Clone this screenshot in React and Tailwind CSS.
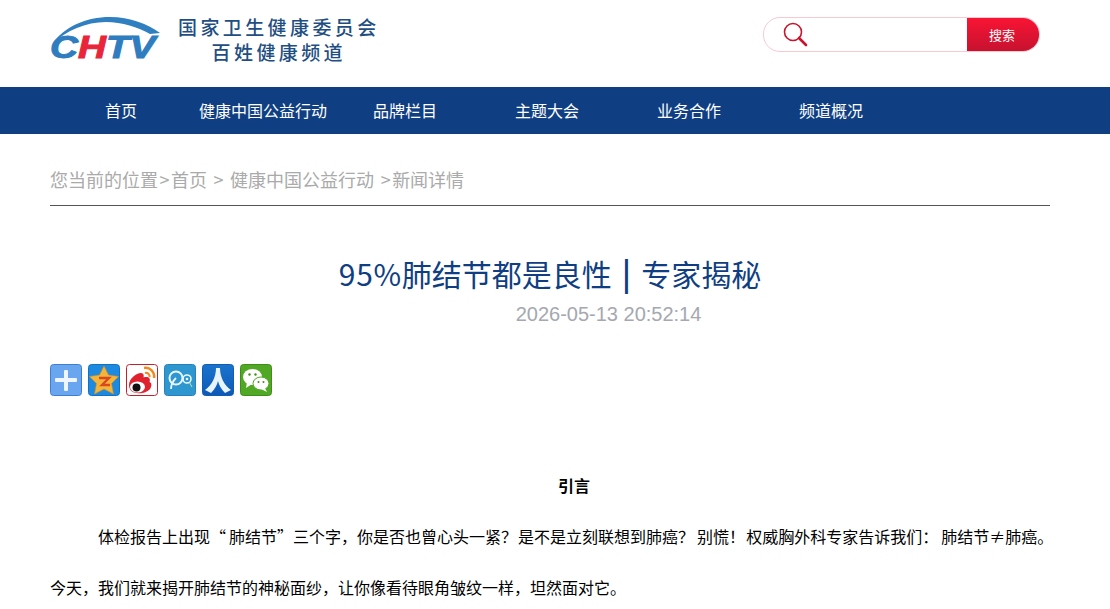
import React from 'react';

const NAV_ITEMS = ['首页', '健康中国公益行动', '品牌栏目', '主题大会', '业务合作', '频道概况'];

const CJK = "font-['Noto_Sans_CJK_SC','Noto_Sans',sans-serif]";

const Logo = () => (
    <div className="flex items-start">
        <div className="relative w-[112px] h-[46px]">
            <svg width="112" height="46" viewBox="0 0 112 46" className="absolute left-0 top-0">
                <path d="M3 28 C14 12 36 2 60 2 C80 2 98 9 110 18 L100 19 C88 12 72 7 56 7 C36 7 16 16 3 28 Z" fill="#2f7fc1" />
            </svg>
            <span className="absolute left-0 top-[17px] font-['Liberation_Sans',sans-serif] font-bold italic text-[32px] leading-[30px] [-webkit-text-stroke:1px_currentColor] scale-x-[1.21] origin-left text-[#2f7dbf]">
                C<span className="text-[#e8253a]">H</span>TV
            </span>
        </div>
        <div className={`ml-[16px] -mt-px text-[#1f4f82] font-medium text-[19px] leading-[25px] tracking-[3.4px] text-center ${CJK}`}>
            <div>国家卫生健康委员会</div>
            <div>百姓健康频道</div>
        </div>
    </div>
);

const SearchBox = () => (
    <div className="mt-[2px] flex w-[277px] h-[35px] rounded-[17px] border border-[#fbc8d0] overflow-hidden">
        <div className="flex-1 flex items-center pl-[19px]">
            <svg width="25" height="25" viewBox="0 0 25 25" fill="none" stroke="#c8142c">
                <circle cx="10" cy="10" r="8.5" strokeWidth="1.6" />
                <path d="M16 16 L23 23" strokeWidth="2.6" strokeLinecap="round" />
            </svg>
        </div>
        <div className={`w-[72px] -my-px bg-gradient-to-b from-[#fb1434] to-[#c4122f] text-white text-[13px] flex items-center justify-center pr-[2px] ${CJK}`}>搜索</div>
    </div>
);

const ShareIcons = () => (
    <div className="flex gap-[6px]">
        <svg width="32" height="32" viewBox="0 0 32 32">
            <rect x="0.5" y="0.5" width="31" height="31" rx="3" fill="#6aa5f0" stroke="#3f7fd0" />
            <rect x="5" y="14" width="22" height="4" rx="1" fill="#eef5fd" />
            <rect x="14" y="6" width="4" height="21" rx="1" fill="#eef5fd" />
        </svg>
        <svg width="32" height="32" viewBox="0 0 32 32">
            <rect x="0.5" y="0.5" width="31" height="31" rx="3" fill="#1b8ae0" stroke="#1670c0" />
            <path d="M16 2 L20.5 11 L30.5 12.5 L23.5 19.5 L25.5 30 L16 25 L6.5 30 L8.5 19.5 L1.5 12.5 L11.5 11 Z" fill="#f3b63a" stroke="#d98c20" strokeWidth="0.6" />
            <path d="M11 14 H21 L14 21 H22" fill="none" stroke="#d9481e" strokeWidth="2.4" />
        </svg>
        <svg width="32" height="32" viewBox="0 0 32 32">
            <rect x="0.5" y="0.5" width="31" height="31" rx="3" fill="#fff" stroke="#c4202c" />
            <path d="M3 21 C3 15 10 9 15 9 C18 9 18 12 17.5 13.5 C22 12 25 14 23.5 18 C26 19 26 22 24 25 C20 30 8 31 4.5 26 C3.5 24.5 3 23 3 21 Z" fill="#e0222e" />
            <ellipse cx="11.5" cy="23" rx="7.5" ry="5.5" fill="#fff" />
            <circle cx="10.5" cy="23.5" r="4" fill="#111" />
            <path d="M18 4 C24 3 29 8 28 14" fill="none" stroke="#f08a1e" strokeWidth="2.5" />
            <path d="M19 9 C22 8 24 11 23.5 13" fill="none" stroke="#f08a1e" strokeWidth="2.2" />
        </svg>
        <svg width="32" height="32" viewBox="0 0 32 32">
            <rect x="0.5" y="0.5" width="31" height="31" rx="3" fill="#2f97cf" stroke="#2a80b8" />
            <circle cx="12" cy="14" r="6.5" fill="none" stroke="#e8f6fb" strokeWidth="2" />
            <path d="M12 14 C8 18 7 22 7 25" fill="none" stroke="#e8f6fb" strokeWidth="1.8" />
            <circle cx="23" cy="15" r="4" fill="none" stroke="#e8f6fb" strokeWidth="1.6" />
            <circle cx="23" cy="15" r="1.3" fill="#e8f6fb" />
            <path d="M25.5 18.5 L28 23" stroke="#bfe6a0" strokeWidth="1" />
        </svg>
        <svg width="32" height="32" viewBox="0 0 32 32">
            <defs>
                <linearGradient id="renren" x1="0" y1="0" x2="0" y2="1">
                    <stop offset="0" stopColor="#1a74cc" />
                    <stop offset="1" stopColor="#0d58b8" />
                </linearGradient>
            </defs>
            <rect x="0.5" y="0.5" width="31" height="31" rx="3" fill="url(#renren)" stroke="#0f5cb0" />
            <path d="M14 4 H18 C18 13 22 21 29 26 L23 29 C19 25 17 21 16 17 C15 21 13 25 9 29 L3 26 C10 21 14 13 14 4 Z" fill="#e8f4fc" />
        </svg>
        <svg width="32" height="32" viewBox="0 0 32 32">
            <rect x="0.5" y="0.5" width="31" height="31" rx="3" fill="#50a824" stroke="#3f8e1a" />
            <ellipse cx="12.5" cy="13" rx="9.5" ry="8" fill="#fff" />
            <path d="M7 18 L6 24 L12 20 Z" fill="#fff" />
            <ellipse cx="21" cy="19.5" rx="8" ry="6.5" fill="#fff" stroke="#50a824" />
            <path d="M25 24 L27 28 L21 25 Z" fill="#fff" />
            <circle cx="9.5" cy="10.5" r="1.2" fill="#3f8e1a" />
            <circle cx="15.5" cy="10.5" r="1.2" fill="#3f8e1a" />
            <circle cx="18.5" cy="18" r="1" fill="#3f8e1a" />
            <circle cx="23.5" cy="18" r="1" fill="#3f8e1a" />
        </svg>
    </div>
);

export default function App() {
    return (
        <div className={`w-[1110px] h-[609px] overflow-hidden bg-white ${CJK}`}>
            {/* header */}
            <div className="h-[87px] flex items-start justify-between pl-[50px] pr-[70px] pt-[15px]">
                <Logo />
                <SearchBox />
            </div>

            {/* nav */}
            <div className="h-[47px] bg-[#0f3f82] flex pl-[50px] pb-[2px]">
                {NAV_ITEMS.map(item => (
                    <div key={item} className="w-[142px] flex items-center justify-center text-white text-[16px] whitespace-nowrap">{item}</div>
                ))}
            </div>

            <div className="mx-[50px] w-[1000px]">
                {/* breadcrumb */}
                <div className="h-[72px] border-b border-[#555] pt-[32px] text-[18px] leading-[27px] text-[#aaaaaa] [word-spacing:1px]">
                    您当前的位置<span className="px-[1.5px]">&gt;</span>首页 <span className="px-[1.5px]">&gt;</span> 健康中国公益行动 <span className="px-[1.5px]">&gt;</span>新闻详情
                </div>

                <h1 className="mt-[45px] h-[45px] text-center text-[30px] leading-[45px] font-normal text-[#0f3f82]">
                    <span className="tracking-[0.7px]">95%</span>肺结节都是良性<span className="px-[10px] text-[36px] leading-[30px] font-['Liberation_Sans',sans-serif]">|</span>专家揭秘
                </h1>
                <div className="mt-[4px] pl-[117px] text-center text-[20px] leading-[28px] text-[#a5a8b0] font-['Liberation_Sans',sans-serif]">2026-05-13 20:52:14</div>

                <div className="mt-[36px]">
                    <ShareIcons />
                </div>

                <div className="mt-[77px] pl-[48px] text-center text-[16px] leading-[24px] font-bold text-black">引言</div>
                <p className="mt-[27px] indent-[48px] text-[16px] leading-[24px] text-black whitespace-nowrap">
                    体检报告上出现<span className="pr-[3px]">“</span>肺结节”三个字，你是否也曾心头一紧<span className="pr-[1px]">？</span>是不是立刻联想到肺癌<span className="pr-[3px]">？</span>别慌<span className="pr-[1px]">！</span>权威胸外科专家告诉我们<span className="pr-[3px]">：</span>肺结节≠肺癌。
                </p>
                <p className="mt-[27px] text-[16px] leading-[24px] text-black whitespace-nowrap">今天，我们就来揭开肺结节的神秘面纱，让你像看待眼角皱纹一样，坦然面对它。</p>
            </div>
        </div>
    );
}
